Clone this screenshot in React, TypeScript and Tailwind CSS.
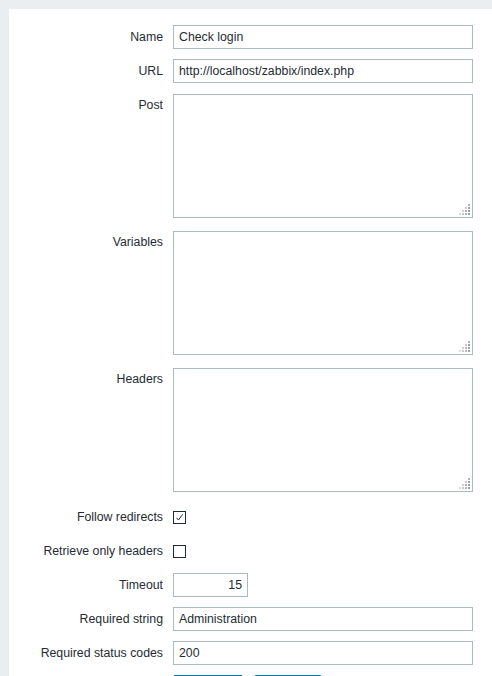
const font = { fontFamily: '"Liberation Sans", Arial, sans-serif' };

function Label({ text }: { text: string }) {
    return (
        <div className="w-[154px] shrink-0 text-right text-[12.3px] leading-[24px] text-[#1f2c33]">
            {text}
        </div>
    );
}

function TextInput({ value }: { value: string }) {
    return (
        <div className="ml-[10px] flex h-[24px] w-[300px] items-center border border-[#acbbc2] bg-white px-[5px] text-[12.3px] text-[#1f2c33]">
            {value}
        </div>
    );
}

function Grip() {
    const dots = [
        [9, 0, "#b4b4b4"],
        [6, 3, "#c8c8c8"],
        [9, 3, "#a0a0a0"],
        [3, 6, "#d2d2d2"],
        [6, 6, "#b4b4b4"],
        [9, 6, "#a0a0a0"],
        [0, 9, "#dcdcdc"],
        [3, 9, "#c8c8c8"],
        [6, 9, "#b4b4b4"],
        [9, 9, "#a0a0a0"],
    ] as const;
    return (
        <svg className="absolute bottom-[2px] right-[2px]" width="11" height="11" viewBox="0 0 11 11">
            {dots.map(([x, y, c], i) => (
                <rect key={i} x={x} y={y} width="2" height="2" fill={c} />
            ))}
        </svg>
    );
}

function TextArea() {
    return (
        <div className="relative ml-[10px] mt-px mb-[3px] h-[124px] w-[300px] border border-[#acbbc2] bg-white">
            <Grip />
        </div>
    );
}

function Checkbox({ checked }: { checked?: boolean }) {
    return (
        <div className="ml-[10px] flex h-[24px] items-center">
            <div className="flex h-[13px] w-[13px] items-center justify-center border border-[#1f2c33] bg-white">
                {checked && (
                    <svg width="11" height="11" viewBox="0 0 11 11">
                        <path d="M2.5 5.8 L4.4 8 L8.6 2.4" fill="none" stroke="#1f2c33" strokeWidth="1" />
                    </svg>
                )}
            </div>
        </div>
    );
}

export default function App() {
    return (
        <div className="h-[676px] w-[492px] overflow-hidden bg-[#ebeef0] pl-[9px] pt-[9px]" style={font}>
            <div className="h-full w-[600px] bg-white pt-[16px]">
                <div className="flex flex-col gap-[10px]">

                    {/* NAME / URL */}
                    <div className="flex">
                        <Label text="Name" />
                        <TextInput value="Check login" />
                    </div>
                    <div className="flex">
                        <Label text="URL" />
                        <TextInput value="http://localhost/zabbix/index.php" />
                    </div>

                    {/* TEXTAREAS */}
                    <div className="flex">
                        <Label text="Post" />
                        <TextArea />
                    </div>
                    <div className="-mt-px flex">
                        <Label text="Variables" />
                        <TextArea />
                    </div>
                    <div className="-mt-px flex">
                        <Label text="Headers" />
                        <TextArea />
                    </div>

                    {/* CHECKBOXES */}
                    <div className="flex">
                        <Label text="Follow redirects" />
                        <Checkbox checked />
                    </div>
                    <div className="flex">
                        <Label text="Retrieve only headers" />
                        <Checkbox />
                    </div>

                    {/* TIMEOUT ETC */}
                    <div className="flex">
                        <Label text="Timeout" />
                        <div className="ml-[10px] flex h-[24px] w-[75px] items-center justify-end border border-[#acbbc2] bg-white px-[5px] text-[12.3px] text-[#1f2c33]">
                            15
                        </div>
                    </div>
                    <div className="flex">
                        <Label text="Required string" />
                        <TextInput value="Administration" />
                    </div>
                    <div className="flex">
                        <Label text="Required status codes" />
                        <TextInput value="200" />
                    </div>

                    {/* BUTTONS */}
                    <div className="flex">
                        <div className="w-[154px] shrink-0" />
                        <div className="ml-[10px] flex items-start gap-[11px]">
                            <button className="h-[24px] w-[70px] rounded-[2px] border border-[#0275b8] bg-[#0275b8] pt-[18px] text-[12.3px] leading-[14px] text-white">
                                Update
                            </button>
                            <button className="h-[24px] w-[68px] rounded-[2px] border border-[#0275b8] bg-white pt-[18px] text-[12.3px] leading-[14px] text-[#0275b8]">
                                Cancel
                            </button>
                        </div>
                    </div>

                </div>
            </div>
        </div>
    );
}
